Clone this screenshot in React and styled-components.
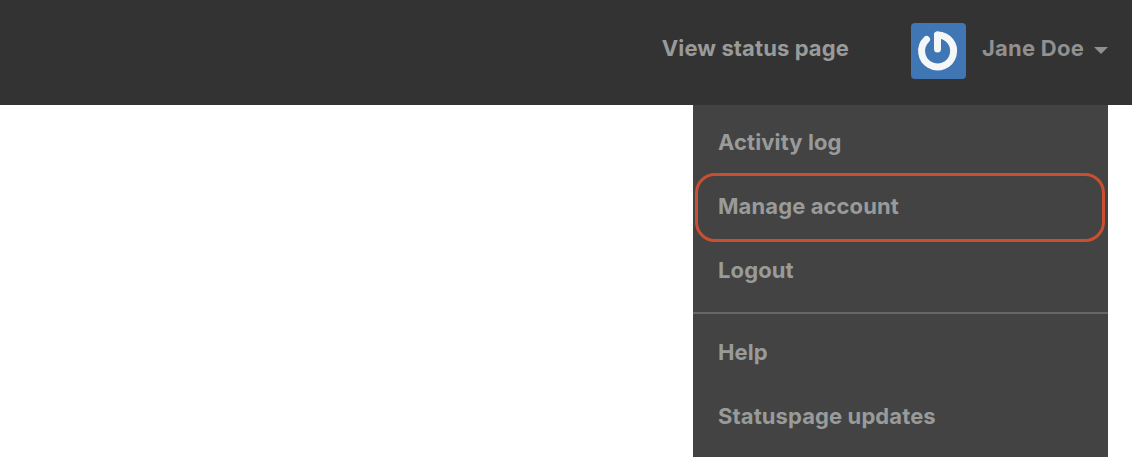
import styled, { createGlobalStyle } from "styled-components";

const GlobalStyle = createGlobalStyle`
  html, body {
    margin: 0;
    padding: 0;
    background: #ffffff;
    font-family: "Inter", "Liberation Sans", sans-serif;
    overflow: hidden;
  }
`;

const Page = styled.div`
  width: 1132px;
  height: 460px;
  background: #ffffff;
`;

const TopBar = styled.header`
  height: 105px;
  box-sizing: border-box;
  padding: 0 24px 9px 0;
  background: #333333;
  display: flex;
  align-items: center;
  justify-content: flex-end;
`;

const StatusLink = styled.a`
  margin-right: 62px;
  font-size: 22px;
  font-weight: 650;
  letter-spacing: 0.1px;
  color: #999b9a;
`;

const Avatar = styled.div`
  width: 55px;
  height: 56px;
  margin: 5px 16px 0 0;
  border-radius: 4px;
  background: #3f76b3;
  display: flex;
  align-items: center;
  justify-content: center;
`;

const UserName = styled.span`
  font-size: 22px;
  font-weight: 650;
  letter-spacing: 0.24px;
  color: #8f908f;
`;

const Caret = styled.span`
  margin: 4px 0 0 10px;
  border-left: 7px solid transparent;
  border-right: 7px solid transparent;
  border-top: 7px solid #8f908f;
`;

const MenuRow = styled.div`
  display: flex;
  justify-content: flex-end;
  padding-right: 24px;
`;

const Menu = styled.nav`
  width: 415px;
  height: 352px;
  box-sizing: border-box;
  padding: 5px 0 9px;
  background: #424342;
`;

const MenuItem = styled.a`
  position: relative;
  height: 64px;
  box-sizing: border-box;
  padding-left: 25px;
  display: flex;
  align-items: center;
  font-size: 22px;
  font-weight: 650;
  letter-spacing: 0.1px;
  color: #999b9a;

  ${(p) =>
    p.$marked &&
    `
    &::after {
      content: "";
      position: absolute;
      left: 2px;
      right: 3px;
      top: -1px;
      bottom: -4px;
      border: 3px solid #c94f33;
      border-radius: 20px;
    }
  `}
`;

const Divider = styled.hr`
  height: 2px;
  margin: 10px 0 6px;
  border: 0;
  background: #666766;
`;

const PowerIcon = () => (
  <svg width="44" height="44" viewBox="0 0 44 44" fill="none">
    <path
      d="M21.5 6 A16 16 0 1 1 10.5 10.5"
      stroke="#f4f6f8"
      strokeWidth="7"
      strokeLinecap="round"
    />
    <path d="M21.5 6 V20" stroke="#f4f6f8" strokeWidth="7" strokeLinecap="round" />
  </svg>
);

export default function App() {
  return (
    <Page>
      <GlobalStyle />
      <TopBar>
        <StatusLink>View status page</StatusLink>
        <Avatar>
          <PowerIcon />
        </Avatar>
        <UserName>Jane Doe</UserName>
        <Caret />
      </TopBar>
      <MenuRow>
        <Menu>
          <MenuItem>Activity log</MenuItem>
          <MenuItem $marked>Manage account</MenuItem>
          <MenuItem>Logout</MenuItem>
          <Divider />
          <MenuItem>Help</MenuItem>
          <MenuItem>Statuspage updates</MenuItem>
        </Menu>
      </MenuRow>
    </Page>
  );
}
